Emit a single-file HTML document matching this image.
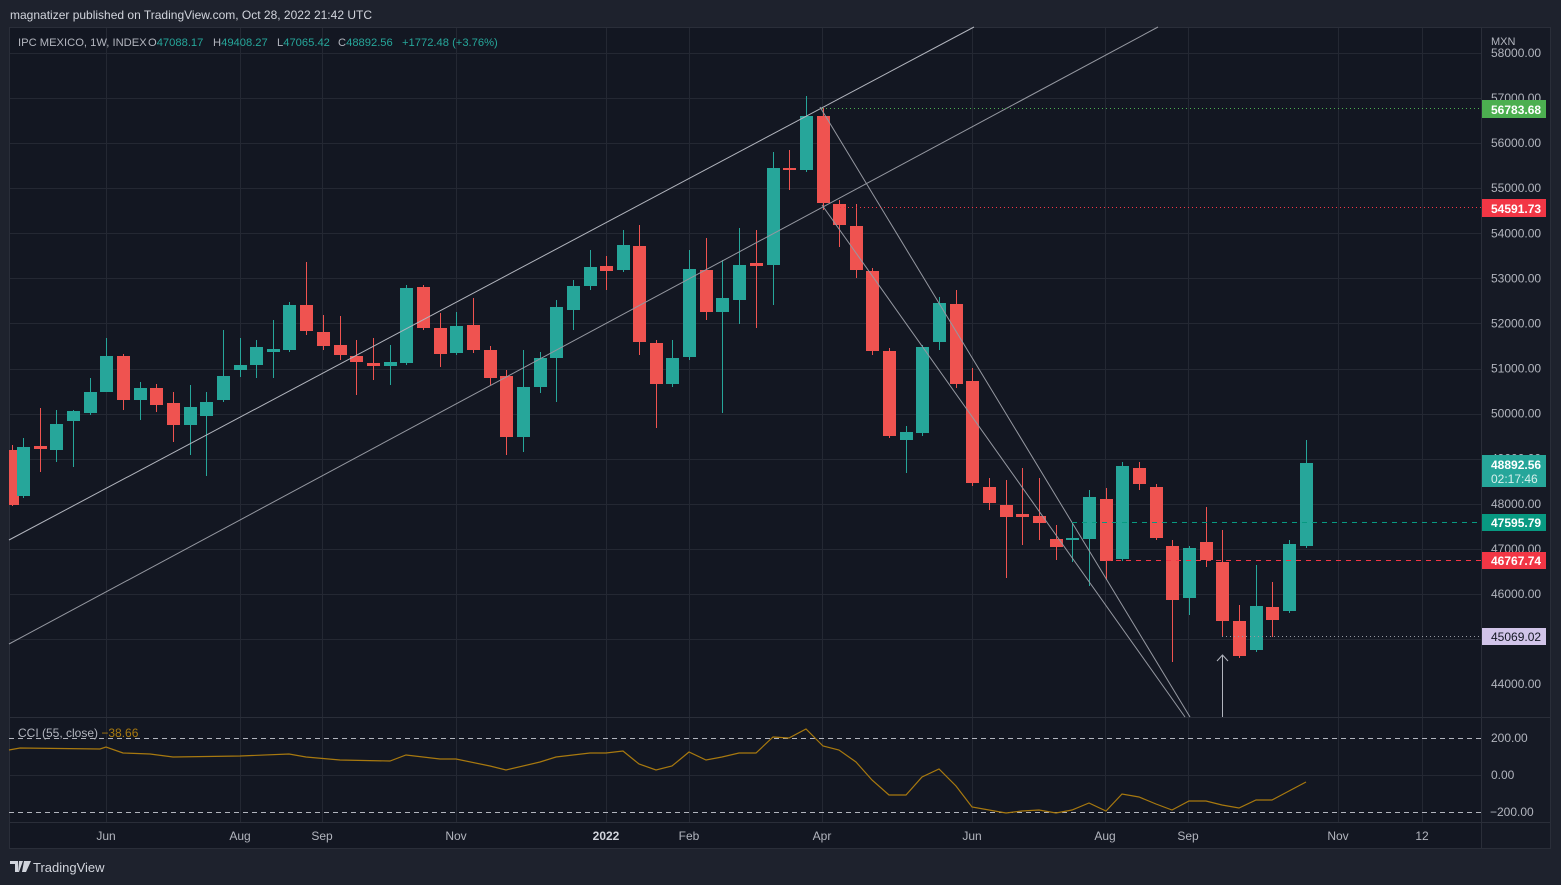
<!DOCTYPE html>
<html><head><meta charset="utf-8"><style>
html,body{margin:0;padding:0;background:#1e222d;width:1561px;height:885px;overflow:hidden;font-family:"Liberation Sans",sans-serif}
svg{position:absolute;left:0;top:0}
</style></head><body>
<svg id="s" width="1561" height="885" xmlns="http://www.w3.org/2000/svg" font-family="Liberation Sans, sans-serif">
<rect x="0" y="0" width="1561" height="885" fill="#1e222d"/>
<rect x="9" y="27" width="1542" height="822" fill="#131722"/>
<rect x="1481" y="27" width="70" height="822" fill="#161a25"/>
<g id="grid" stroke="#242833" stroke-width="1"></g>
<line x1="9" y1="717.5" x2="1551" y2="717.5" stroke="#2a2e39"/>
<line x1="9" y1="822.5" x2="1551" y2="822.5" stroke="#2a2e39"/>
<line x1="1481.5" y1="27" x2="1481.5" y2="849" stroke="#2a2e39"/>
<rect x="9.5" y="27.5" width="1541" height="821" fill="none" stroke="#2a2e39"/>
<text x="10" y="19" fill="#d1d4dc" font-size="12">magnatizer published on TradingView.com, Oct 28, 2022 21:42 UTC</text>
<g id="cdl"></g>
<g stroke-width="1" fill="none">
<line x1="9" y1="540" x2="974" y2="27" stroke="#b2b5be"/>
<line x1="9" y1="644" x2="1158" y2="27" stroke="#9598a1"/>
<line x1="820" y1="107" x2="1190" y2="717" stroke="#9598a1"/>
<line x1="822" y1="205" x2="1185" y2="717" stroke="#9598a1"/>
<line x1="1222.5" y1="717" x2="1222.5" y2="656" stroke="#b2b5be"/>
<polyline points="1217,661 1222.5,655 1228,661" stroke="#b2b5be"/>
<line x1="822" y1="108.5" x2="1481" y2="108.5" stroke="#4caf50" stroke-dasharray="1,3"/>
<line x1="840" y1="207.5" x2="1481" y2="207.5" stroke="#f23645" stroke-dasharray="1,3"/>
<line x1="1072" y1="522.5" x2="1481" y2="522.5" stroke="#089981" stroke-dasharray="5,5"/>
<line x1="1106" y1="560.5" x2="1481" y2="560.5" stroke="#f23645" stroke-dasharray="5,5"/>
<line x1="1222" y1="636.5" x2="1481" y2="636.5" stroke="#9598a1" stroke-dasharray="1,3"/>
<line x1="9" y1="738.5" x2="1481" y2="738.5" stroke="#b2b5be" stroke-dasharray="5,4"/>
<line x1="9" y1="812.5" x2="1481" y2="812.5" stroke="#b2b5be" stroke-dasharray="5,4"/>
<polyline id="cci" stroke="#a8790f" stroke-width="1.2"/>
</g>
<g font-size="11.2" fill="#b2b5be">
<text x="18" y="46">IPC MEXICO, 1W, INDEX</text>
<text x="148" y="46">O<tspan fill="#26a69a">47088.17</tspan></text>
<text x="213" y="46">H<tspan fill="#26a69a">49408.27</tspan></text>
<text x="277" y="46">L<tspan fill="#26a69a">47065.42</tspan></text>
<text x="338" y="46">C<tspan fill="#26a69a">48892.56</tspan></text>
<text x="402" y="46" fill="#26a69a">+1772.48 (+3.76%)</text>
</g>
<text x="18" y="737" font-size="12" fill="#b2b5be">CCI (55, close) <tspan fill="#a8790f">−38.66</tspan></text>
<text x="1491" y="45" font-size="11" fill="#b2b5be">MXN</text>
<g id="plab" font-size="12" fill="#b2b5be"></g>
<g font-size="12" font-weight="bold">
<rect x="1482" y="100" width="64" height="18" fill="#4caf50"/><text x="1491" y="114" fill="#fff">56783.68</text>
<rect x="1482" y="199" width="64" height="18" fill="#f23645"/><text x="1491" y="213" fill="#fff">54591.73</text>
<rect x="1482" y="455" width="64" height="32" fill="#26a69a"/><text x="1491" y="469" fill="#fff">48892.56</text><text x="1491" y="483" fill="#d7f0ec" font-weight="normal">02:17:46</text>
<rect x="1482" y="514" width="64" height="17" fill="#089981"/><text x="1491" y="527" fill="#fff">47595.79</text>
<rect x="1482" y="552" width="64" height="17" fill="#f23645"/><text x="1491" y="565" fill="#fff">46767.74</text>
<rect x="1482" y="628" width="64" height="17" fill="#d1c4e9"/><text x="1491" y="641" fill="#131722" font-weight="normal">45069.02</text>
</g>
<g font-size="12" fill="#b2b5be">
<text x="1491" y="742">200.00</text><text x="1491" y="779">0.00</text><text x="1490" y="816">−200.00</text>
</g>
<g font-size="12" fill="#b2b5be" text-anchor="middle">
<text x="106" y="840">Jun</text><text x="240" y="840">Aug</text><text x="322" y="840">Sep</text><text x="456" y="840">Nov</text><text x="606" y="840" font-weight="bold" fill="#d1d4dc">2022</text><text x="689" y="840">Feb</text><text x="822" y="840">Apr</text><text x="972" y="840">Jun</text><text x="1105" y="840">Aug</text><text x="1188" y="840">Sep</text><text x="1338" y="840">Nov</text><text x="1422" y="840">12</text>
</g>
<g fill="#d1d4dc"><path d="M10 861h8v11h-3v-8h-5z M19 861h4l-4 11h-1z"/><path d="M24 861h7l-5 11h-4z"/></g>
<text x="33" y="872" font-size="13" fill="#d1d4dc">TradingView</text>
</svg>
<script>
var NS="http://www.w3.org/2000/svg";
function el(p,t,a){var e=document.createElementNS(NS,t);for(var k in a)e.setAttribute(k,a[k]);p.appendChild(e);return e;}
var g=document.getElementById('grid');
for(var i=0;i<14;i++){var y=53+i*45.08;el(g,'line',{x1:9,y1:Math.round(y)+.5,x2:1481,y2:Math.round(y)+.5});}
[775].forEach(function(y){el(g,'line',{x1:9,y1:y+.5,x2:1481,y2:y+.5});});
[106,240,322,456,606,689,822,972,1105,1188,1338,1422].forEach(function(x){el(g,'line',{x1:x+.5,y1:27,x2:x+.5,y2:822});});
var pl=document.getElementById('plab');
for(var i=0;i<15;i++){var p=58000-i*1000,y=53+i*45.08+4;var t=el(pl,'text',{x:1491,y:y});t.textContent=p+'.00';}
var C=[[12,450,505,445,506,'r'],[23,447,496,438,498,'g'],[40,446,449,408,472,'r'],[56,424,450,410,462,'g'],[73,411,421,410,467,'g'],[90,392,413,378,415,'g'],[106,356,392,338,392,'g'],[123,356,400,354,410,'r'],[140,388,400,382,420,'g'],[156,388,405,384,412,'r'],[173,403,425,392,442,'r'],[190,407,425,385,455,'g'],[206,402,416,392,476,'g'],[223,376,400,330,402,'g'],[240,365,370,338,377,'g'],[256,347,365,340,378,'g'],[273,349,352,320,378,'g'],[289,305,350,302,352,'g'],[306,305,331,262,335,'r'],[323,332,346,315,350,'r'],[340,345,355,316,360,'r'],[356,356,362,340,395,'r'],[373,363,366,338,380,'r'],[390,362,366,345,385,'g'],[406,288,363,285,365,'g'],[423,287,328,285,330,'r'],[440,328,354,313,367,'r'],[456,326,353,312,355,'g'],[473,325,350,298,353,'r'],[490,350,378,346,385,'r'],[506,376,437,370,455,'r'],[523,387,437,350,452,'g'],[540,358,387,352,393,'g'],[556,307,358,300,402,'g'],[573,286,310,280,330,'g'],[590,267,286,250,290,'g'],[606,266,271,256,290,'r'],[623,245,270,230,272,'g'],[639,246,342,225,355,'r'],[656,343,384,340,428,'r'],[672,358,384,340,387,'g'],[689,269,357,250,360,'g'],[706,270,312,238,320,'r'],[722,298,312,260,413,'g'],[739,265,300,228,324,'g'],[756,263,266,230,328,'r'],[773,168,265,152,305,'g'],[789,168,170,150,190,'r'],[806,116,170,96,172,'g'],[823,116,203,108,210,'r'],[839,204,225,200,247,'r'],[856,226,270,204,278,'r'],[872,271,351,268,355,'r'],[889,351,436,348,438,'r'],[906,432,440,426,473,'g'],[922,347,433,345,436,'g'],[939,303,342,297,350,'g'],[956,304,384,290,388,'r'],[972,381,483,368,486,'r'],[989,487,503,478,510,'r'],[1006,505,517,480,578,'r'],[1022,514,517,468,545,'r'],[1039,516,523,478,540,'r'],[1056,539,547,525,560,'r'],[1072,538,540,522,562,'g'],[1089,497,539,490,586,'g'],[1106,499,561,488,580,'r'],[1122,466,559,462,561,'g'],[1139,468,484,462,490,'r'],[1156,487,538,484,540,'r'],[1172,546,600,540,662,'r'],[1189,548,598,546,615,'g'],[1206,542,560,507,567,'r'],[1222,562,621,530,637,'r'],[1239,621,656,605,658,'r'],[1256,606,650,565,652,'g'],[1272,607,620,582,637,'r'],[1289,544,611,540,613,'g'],[1306,463,546,440,548,'g']];
var cg=document.getElementById('cdl');
C.forEach(function(c){var col=c[5]=='g'?'#26a69a':'#ef5350';var x=c[0];
el(cg,'rect',{x:x,y:c[3],width:1,height:c[4]-c[3],fill:col});
var x0=Math.max(9,x-6);el(cg,'rect',{x:x0,y:c[1],width:x+7-x0,height:Math.max(2,c[2]-c[1]),fill:col});});
var pts=[[9,750],[20,748],[100,749],[106,747],[123,753],[150,754],[173,757],[240,756],[289,754],[306,757],[340,760],[390,761],[406,755],[440,759],[456,759],[490,766],[506,770],[540,762],[556,757],[590,753],[606,753],[623,751],[639,764],[656,770],[672,766],[689,752],[706,760],[722,757],[739,753],[756,753],[773,737],[789,738],[806,729],[823,746],[839,750],[856,762],[872,780],[889,795],[906,795],[922,777],[939,769],[956,786],[972,807],[989,810],[1006,813],[1022,811],[1039,810],[1056,813],[1072,810],[1089,803],[1106,811],[1122,794],[1139,797],[1156,804],[1172,810],[1189,801],[1206,801],[1222,805],[1239,808],[1256,800],[1272,800],[1289,791],[1306,782]];
document.getElementById('cci').setAttribute('points',pts.map(function(p){return p.join(',')}).join(' '));
</script>
</body></html>
